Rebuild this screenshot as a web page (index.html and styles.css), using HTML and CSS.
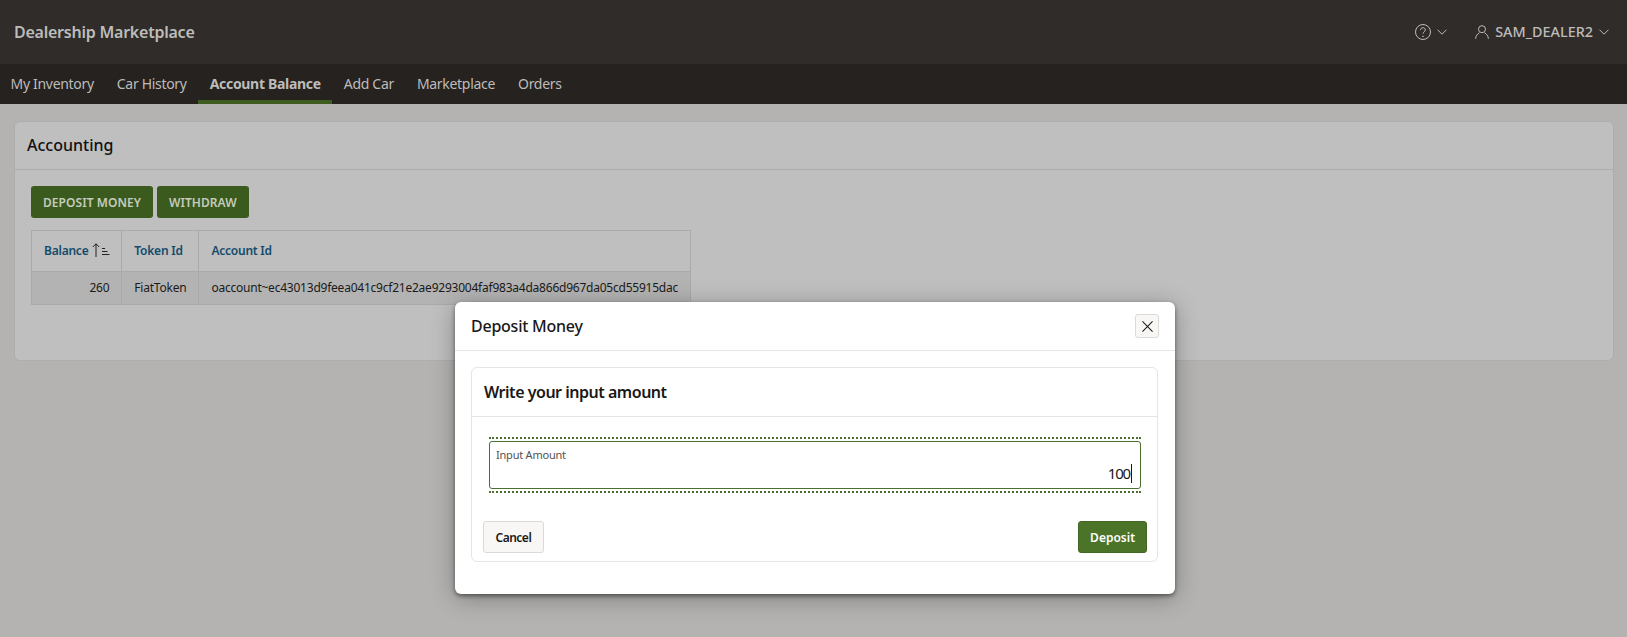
FILE: index.html
```html
<!DOCTYPE html>
<html>
<head>
	<meta charset="utf-8">
	<title>Dealership Marketplace</title>
	<link rel="stylesheet" href="styles.css">
</head>
<body>
	<header class="topbar">
		<div class="brand">Dealership Marketplace</div>
		<div class="top-actions">
			<span class="top-item help-item">
				<svg class="icon-help" viewBox="0 0 16 16" width="16" height="16" fill="none" stroke="currentColor"><circle cx="8" cy="8" r="7.5"/><path d="M5.6 6c0-1.5 1.100-2.300 2.400-2.300s2.400.9 2.400 2.200c0 1.800-2.400 1.800-2.400 3.800"/><circle cx="8" cy="12.300" r=".4"/></svg>
				<svg class="chevron" viewBox="0 0 10 6" width="10" height="6" fill="none" stroke="currentColor"><path d="M.5.7 5 5.2 9.500.7"/></svg>
			</span>
			<span class="top-item user-item">
				<svg class="icon-user" viewBox="0 0 14 14" width="14" height="14" fill="none" stroke="currentColor"><circle cx="7" cy="4.200" r="3.500"/><path d="M.6 13.800c.2-3 1.800-5 3.900-6M13.400 13.800c-.2-3-1.800-5-3.900-6"/></svg>
				<span class="user-name">SAM_DEALER2</span>
				<svg class="chevron" viewBox="0 0 10 6" width="10" height="6" fill="none" stroke="currentColor"><path d="M.5.7 5 5.2 9.500.7"/></svg>
			</span>
		</div>
	</header>
	<nav class="tabs">
		<a class="tab">My Inventory</a>
		<a class="tab">Car History</a>
		<a class="tab tab-current">Account Balance</a>
		<a class="tab">Add Car</a>
		<a class="tab">Marketplace</a>
		<a class="tab">Orders</a>
	</nav>
	<main class="content">
		<section class="panel">
			<h2 class="panel-title">Accounting</h2>
			<div class="panel-body">
				<div class="actions">
					<button class="btn-dim">DEPOSIT MONEY</button>
					<button class="btn-dim">WITHDRAW</button>
				</div>
				<table class="report">
					<thead>
						<tr>
							<th class="col-balance">Balance <svg class="sort-icon" viewBox="0 0 18 14" width="18" height="14" fill="none" stroke="#222"><path d="M4 14V.8M.8 4 4 .8 7.200 4"/><path d="M10 5.500h3M10 8.500h5.500M10 11.500h7.500"/></svg></th>
							<th class="col-token">Token Id</th>
							<th class="col-account">Account Id</th>
						</tr>
					</thead>
					<tbody>
						<tr>
							<td class="num">260</td>
							<td>FiatToken</td>
							<td>oaccount~ec43013d9feea041c9cf21e2ae9293004faf983a4da866d967da05cd55915dac</td>
						</tr>
					</tbody>
				</table>
			</div>
		</section>
	</main>

	<div class="dialog">
		<div class="dialog-head">
			<h2 class="dialog-title">Deposit Money</h2>
			<button class="close-btn" aria-label="Close">
				<svg viewBox="0 0 12 12" width="11" height="11" fill="none" stroke="#1a1816" stroke-width="1.100"><path d="M.5.5l11 11M11.500.5l-11 11"/></svg>
			</button>
		</div>
		<div class="dialog-body">
			<section class="card">
				<h3 class="card-title">Write your input amount</h3>
				<div class="card-body">
					<div class="field-focus">
						<label class="field">
							<span class="field-label">Input Amount</span>
							<span class="field-value">100<i class="caret"></i></span>
						</label>
					</div>
				</div>
				<div class="card-foot">
					<button class="btn-cancel">Cancel</button>
					<button class="btn-deposit">Deposit</button>
				</div>
			</section>
		</div>
	</div>
</body>
</html>
```

FILE: styles.css
```css
html {
	font: 14px/1.4 "Noto Sans", sans-serif;
	background: #b4b3b1;
	color: #1a1816;
}

body {
	margin: 0;
	height: 637px;
	overflow: hidden;
	position: relative;
}

button {
	font-family: inherit;
	cursor: pointer;
}

.topbar {
	display: flex;
	align-items: center;
	justify-content: space-between;
	height: 64px;
	padding: 0 18px 0 14px;
	background: #2f2c2a;
	color: #bdbcba;
}

.brand {
	font-size: 16px;
	font-weight: 600;
	letter-spacing: -.015em;
}

.top-actions {
	display: flex;
	align-items: center;
	gap: 28px;
}

.top-item {
	display: flex;
	align-items: center;
}

.help-item .chevron {
	margin-left: 6px;
}

.user-name {
	margin: 0 6px 0 6px;
	font-size: 14.4px;
	font-weight: 500;
}

.tabs {
	display: flex;
	height: 40px;
	background: #26221f;
	color: #bdbcba;
}

.tab {
	display: flex;
	align-items: center;
	padding: 0 11.5px;
	font-size: 14px;
	letter-spacing: -.022em;
	border-top: 4px solid transparent;
	border-bottom: 4px solid transparent;
}

.tab:first-child {
	margin-left: -1px;
}

.tab-current {
	font-weight: 700;
	border-bottom-color: #3e5b20;
}

.content {
	padding: 17px 13px 0 14px;
}

.panel {
	height: 240px;
	box-sizing: border-box;
	background: #bfbfbf;
	border: 1px solid #adadac;
	border-radius: 6px;
}

.panel-title {
	margin: 0;
	height: 47px;
	padding-left: 12px;
	font-size: 16px;
	font-weight: 500;
	line-height: 47px;
	color: #111;
	border-bottom: 1px solid #adadac;
}

.panel-body {
	padding: 16px;
}

.actions {
	display: flex;
	gap: 4px;
}

.btn-dim {
	height: 32px;
	padding: 0 12px;
	font-size: 12px;
	font-weight: 600;
	letter-spacing: .05px;
	color: #c4ccbb;
	background: #3b5a1e;
	border: 0;
	border-radius: 3px;
}

.report {
	margin-top: 12px;
	border-collapse: collapse;
	font-size: 12px;
	letter-spacing: -.019em;
	color: #1b1a18;
}

.report th, .report td {
	padding: 1px 12px 0;
	border: 1px solid #aaa;
	white-space: nowrap;
}

.report th {
	height: 39px;
	text-align: left;
	font-weight: 600;
	color: #134c6b;
	background: #bfbfbf;
}

.report td {
	height: 31px;
	background: #b3b3b3;
}

.report td.num {
	text-align: right;
}

.sort-icon {
	margin: 0 -1px 0 1px;
	vertical-align: -2px;
}

.dialog {
	position: absolute;
	left: 455px;
	top: 302px;
	width: 720px;
	height: 292px;
	background: #fff;
	border-radius: 6px;
	box-shadow: 0 2px 4px rgba(0, 0, 0, .45), 0 4px 24px rgba(0, 0, 0, .3);
}

.dialog-head {
	display: flex;
	align-items: center;
	justify-content: space-between;
	height: 48px;
	padding: 0 16px;
	border-bottom: 1px solid #e6e5e3;
}

.dialog-title {
	margin: 0;
	font-size: 16px;
	font-weight: 500;
	letter-spacing: -.015em;
}

.close-btn {
	display: flex;
	align-items: center;
	justify-content: center;
	width: 24px;
	height: 24px;
	padding: 0;
	background: #f8f7f5;
	border: 1px solid #dcdad7;
	border-radius: 3px;
}

.dialog-body {
	padding: 16px 17px 0 16px;
}

.card {
	border: 1px solid #e6e5e3;
	border-radius: 6px;
}

.card-title {
	margin: 0;
	height: 48px;
	padding-left: 12px;
	font-size: 16px;
	font-weight: 600;
	letter-spacing: -.03em;
	line-height: 48px;
	border-bottom: 1px solid #e6e5e3;
}

.card-body {
	padding: 20px 16px 0 17px;
}

.field-focus {
	padding: 2px 0;
	border-top: 2px dotted #4c6e2e;
	border-bottom: 2px dotted #4c6e2e;
}

.field {
	display: block;
	box-sizing: border-box;
	height: 48px;
	padding: 5px 7px 5px 6px;
	border: 1px solid #4c6e2e;
	border-radius: 3px;
}

.field-label {
	display: block;
	font-size: 11px;
	letter-spacing: -.02em;
	line-height: 16px;
	color: #55524e;
}

.field-value {
	display: block;
	font-size: 15px;
	letter-spacing: -.08em;
	line-height: 20px;
	text-align: right;
	padding-right: 1px;
}

.caret {
	display: inline-block;
	width: 1px;
	height: 19px;
	margin-left: 1px;
	vertical-align: -4px;
	background: #1a1816;
}

.card-foot {
	display: flex;
	justify-content: space-between;
	padding: 28px 10px 8px 11px;
}

.btn-cancel, .btn-deposit {
	height: 32px;
	padding: 0 11px;
	font-size: 12px;
	font-weight: 600;
	border-radius: 3px;
}

.btn-cancel {
	padding: 0 11.5px;
	letter-spacing: -.5px;
	color: #1a1816;
	background: #f8f7f5;
	border: 1px solid #dcdad7;
}

.btn-deposit {
	color: #fff;
	background: #4c7429;
	border: 1px solid #426723;
}
```
